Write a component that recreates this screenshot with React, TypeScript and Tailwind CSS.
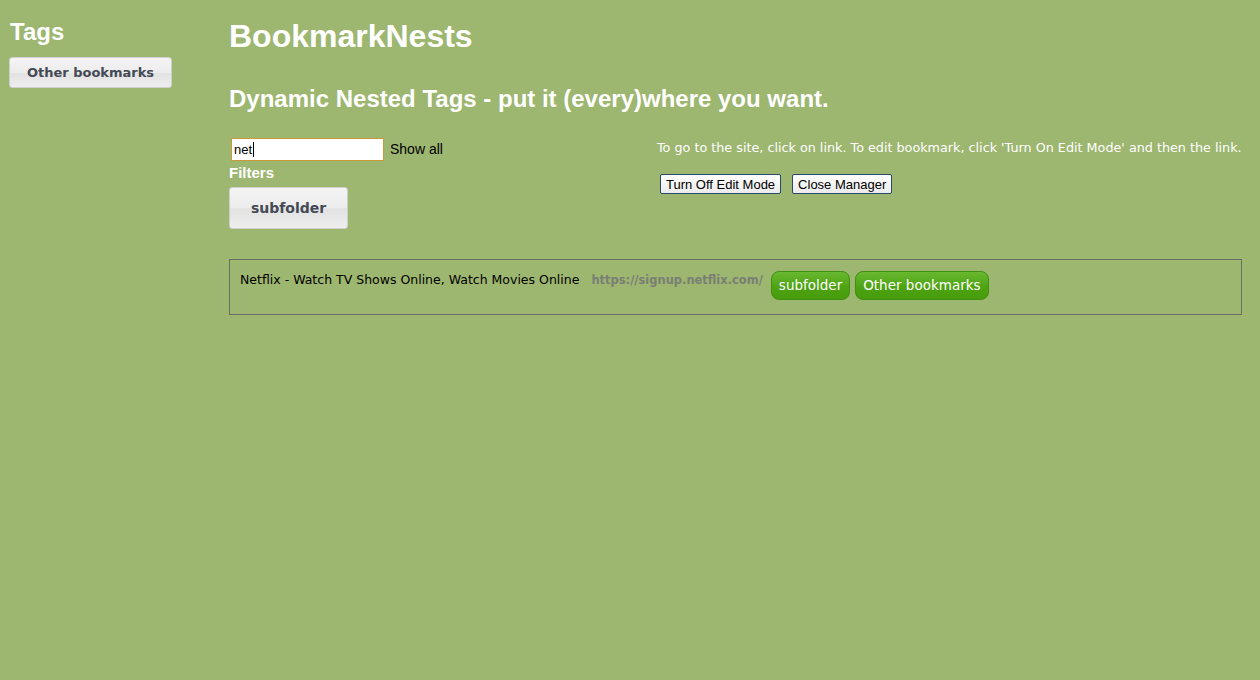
import React from "react";

const grayBtn =
  "rounded-[3px] border border-[#cfcfcf] bg-[linear-gradient(#f4f4f4,#ececec_50%,#e2e2e2_52%,#eeeeee)] text-[#444a55] font-bold [font-family:'DejaVu_Sans',Verdana,sans-serif]";
const greenBtn =
  "rounded-[8px] border border-[#3f8f12] bg-[linear-gradient(#68b830,#4ea313_55%,#469c0a)] text-white [font-family:'DejaVu_Sans',Verdana,sans-serif] text-[13.5px] h-[29px] px-[7px] flex items-center";
const nativeBtn =
  "h-[20px] px-[5px] rounded-[2px] border border-[#2b4a6b] bg-[linear-gradient(#ffffff,#ebebeb)] text-black text-[13px] [font-family:'Liberation_Sans',Arial,sans-serif] leading-none";

export default function App() {
  return (
    <div className="min-h-[680px] w-full bg-[#9db670] flex [font-family:'Liberation_Sans',Arial,sans-serif]">
      <aside className="w-[229px] shrink-0 pl-[9px] pt-[18px]">
        <h2 className="text-white font-bold text-[24px] leading-[28px] pl-[1px]">Tags</h2>
        <button className={`${grayBtn} mt-[11px] w-[163px] h-[31px] text-[13px]`}>Other bookmarks</button>
      </aside>
      <main className="flex-1 pr-[18px] pt-[18px]">
        <h1 className="text-white font-bold text-[32px] leading-[37px]">BookmarkNests</h1>
        <h2 className="text-white font-bold text-[24px] leading-[28px] mt-[30px]">
          Dynamic Nested Tags - put it (every)where you want.
        </h2>
        <div className="flex justify-between mt-[17px]">
          <div className="pt-[8px]">
            <div className="flex items-center">
              <div className="ml-[2px] w-[153px] h-[23px] border border-[#c99a3a] bg-white flex items-center pl-[2px] text-[13px] text-black">
                net<span className="inline-block w-[1px] h-[15px] bg-black ml-[1px]"></span>
              </div>
              <span className="ml-[6px] text-[14px] text-black">Show all</span>
            </div>
            <div className="text-white font-bold text-[15px] leading-[17px] mt-[3px]">Filters</div>
            <button className={`${grayBtn} mt-[6px] w-[119px] h-[42px] text-[14px]`}>subfolder</button>
          </div>
          <div className="w-[585px]">
            <p className="text-white text-[12.75px] leading-[15px] [font-family:'DejaVu_Sans',Tahoma,sans-serif] whitespace-nowrap mt-[10px]">
              To go to the site, click on link. To edit bookmark, click 'Turn On Edit Mode' and then the link.
            </p>
            <div className="flex gap-[11px] mt-[19px] ml-[3px]">
              <button className={nativeBtn}>Turn Off Edit Mode</button>
              <button className={nativeBtn}>Close Manager</button>
            </div>
          </div>
        </div>
        <div className="mt-[30px] border border-[#6a6f66] h-[56px] flex items-start pl-[10px] pt-[11px]">
          <span className="mt-[1px] text-[12.5px] leading-[15px] text-black [font-family:'DejaVu_Sans',Tahoma,sans-serif]">
            Netflix - Watch TV Shows Online, Watch Movies Online
          </span>
          <span className="mt-[1px] ml-[12px] text-[12.75px] leading-[15px] text-[#7a7f74] font-bold [font-family:'DejaVu_Sans_Condensed','DejaVu_Sans',Tahoma,sans-serif]">
            https://signup.netflix.com/
          </span>
          <div className="flex gap-[5px] ml-[8px]">
            <span className={greenBtn}>subfolder</span>
            <span className={greenBtn}>Other bookmarks</span>
          </div>
        </div>
      </main>
    </div>
  );
}
